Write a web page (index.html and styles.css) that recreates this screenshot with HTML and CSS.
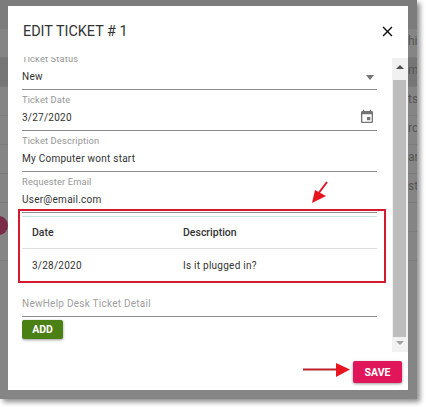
FILE: index.html
```html
<!DOCTYPE html>
<html lang="en">
<head>
  <meta charset="UTF-8" />
  <title>Edit Ticket</title>
  <link rel="stylesheet" href="styles.css">
</head>
<body>
  <div class="screen">
    <div class="rows">
      <div class="row"></div>
      <div class="row"><span>hi</span></div>
      <div class="row active"><span>mi</span></div>
      <div class="row"><span>ts</span></div>
      <div class="row"><span>rc</span></div>
      <div class="row"><span>ar</span></div>
      <div class="row"><span>st</span></div>
      <div class="row"></div>
      <div class="row"></div>
    </div>
    <div class="badge"></div>

    <div class="dialog">
      <div class="dialog-head">
        <div class="title">EDIT TICKET # 1</div>
        <svg class="close" viewBox="0 0 24 24"><path d="M19 6.41 17.59 5 12 10.59 6.41 5 5 6.41 10.59 12 5 17.59 6.41 19 12 13.41 17.59 19 19 17.59 13.41 12z"/></svg>
      </div>

      <div class="dialog-body">
        <div class="scroll-area">
          <div class="form">
            <div class="field">
              <label>Ticket Status</label>
              <div class="value">New<span class="select-arrow"></span></div>
            </div>
            <div class="field">
              <label>Ticket Date</label>
              <div class="value">3/27/2020
                <svg class="calendar" viewBox="0 0 24 24"><path d="M17 12h-5v5h5v-5zM16 1v2H8V1H6v2H5c-1.11 0-1.99.9-1.99 2L3 19c0 1.1.89 2 2 2h14c1.1 0 2-.9 2-2V5c0-1.1-.9-2-2-2h-1V1h-2zm3 18H5V8h14v11z"/></svg>
              </div>
            </div>
            <div class="field">
              <label>Ticket Description</label>
              <div class="value">My Computer wont start</div>
            </div>
            <div class="field">
              <label>Requester Email</label>
              <div class="value">User@email.com</div>
            </div>

            <table class="details">
              <tr><th>Date</th><th>Description</th></tr>
              <tr><td>3/28/2020</td><td>Is it plugged in?</td></tr>
            </table>

            <div class="field new-detail">
              <div class="value placeholder">NewHelp Desk Ticket Detail</div>
            </div>
            <button class="btn add">ADD</button>
          </div>
        </div>

        <div class="scrollbar">
          <div class="scroll-btn"><span class="arrow-up"></span></div>
          <div class="thumb"></div>
          <div class="scroll-btn down"><span class="arrow-down"></span></div>
        </div>
      </div>

      <div class="dialog-foot">
        <button class="btn save">SAVE</button>
      </div>
    </div>
  </div>

  <!-- red annotations drawn on top of the screenshot -->
  <svg class="notes" viewBox="0 0 426 407">
    <rect x="19" y="210" width="366" height="72" fill="none" stroke="#d41a30" stroke-width="2"/>
    <path d="M327 182 318 194" stroke="#e0182c" stroke-width="2" fill="none"/>
    <path d="M312 203 315 190 326 196z" fill="#e8141f"/>
    <path d="M303 369.5H337" stroke="#b8202c" stroke-width="2" fill="none"/>
    <path d="M350 369.5 336 363V377z" fill="#e8141f"/>
  </svg>
</body>
</html>
```

FILE: styles.css
```css
* {
  box-sizing: border-box;
}
html, body {
  height: 100%;
}
body {
  margin: 0;
  background: #fff;
  font-family: Roboto, Arial, sans-serif;
  color: #333;
  overflow: hidden;
}
.screen {
  position: relative;
  width: 417px;
  height: 399px;
  background: #858585;
  box-shadow: 3px 3px 5px rgba(0, 0, 0, 0.45);
  overflow: hidden;
}
.rows {
  display: flex;
  flex-direction: column;
}
.row {
  height: 29px;
  border-bottom: 1px solid #7b7b7b;
  padding-left: 408px;
  font-size: 12px;
  line-height: 25px;
  color: #555;
  white-space: nowrap;
}
.row:first-child {
  background: #7c7c7c;
}
.row.active {
  background: #767676;
}
.badge {
  position: absolute;
  left: -11px;
  top: 216px;
  width: 19px;
  height: 19px;
  border-radius: 50%;
  background: #7a2b47;
}
.dialog {
  position: absolute;
  left: 8px;
  top: 6px;
  width: 400px;
  height: 384px;
  background: #fff;
  display: flex;
  flex-direction: column;
}
.dialog-head {
  height: 51px;
  flex: none;
  display: flex;
  align-items: center;
  justify-content: space-between;
  padding: 0 12px 0 15px;
}
.title {
  font-size: 14.4px;
  color: #333;
}
.close {
  width: 17px;
  height: 17px;
  fill: #111;
}
.dialog-body {
  flex: none;
  height: 295px;
  display: flex;
}
.scroll-area {
  flex: none;
  width: 355px;
  margin: 0 15px 0 14px;
  overflow: hidden;
}
.form {
  margin-top: -8px;
}
.field {
  height: 41px;
  padding-top: 4px;
  border-bottom: 1px solid #8c8c8c;
}
.field label {
  display: block;
  height: 12px;
  font-size: 9.3px;
  line-height: 12px;
  letter-spacing: 0.15px;
  color: #969696;
}
.value {
  display: flex;
  align-items: center;
  justify-content: space-between;
  height: 16px;
  margin-top: 4px;
  font-size: 10px;
  line-height: 16px;
  letter-spacing: 0.25px;
}
.select-arrow {
  width: 0;
  height: 0;
  margin-right: 3px;
  border-left: 4.5px solid transparent;
  border-right: 4.5px solid transparent;
  border-top: 5px solid #757575;
}
.calendar {
  width: 16px;
  height: 16px;
  fill: #757575;
  margin-right: 2px;
  margin-top: -2px;
}
.details {
  width: 100%;
  margin-top: 3px;
  border-collapse: collapse;
  border-top: 1px solid #c6e4e4;
  font-size: 10px;
  table-layout: fixed;
}
.details th {
  height: 32px;
  padding: 0 0 0 10px;
  text-align: left;
  font-size: 10.5px;
  font-weight: 500;
  border-bottom: 1px solid #e0e0e0;
}
.details td {
  height: 33px;
  padding: 0 0 0 10px;
  letter-spacing: 0.25px;
}
.details th:first-child, .details td:first-child {
  width: 151px;
}
.new-detail {
  height: 21px;
  margin-top: 14px;
  padding-top: 0;
}
.placeholder {
  margin-top: 0;
  color: #a0a0a0;
  font-size: 10px;
  letter-spacing: 0.25px;
}
.btn {
  border: none;
  border-radius: 2px;
  color: #fff;
  font-family: Roboto, Arial, sans-serif;
  font-size: 10.5px;
  font-weight: 700;
  padding: 0;
  box-shadow: 0 1px 3px rgba(0, 0, 0, 0.4);
}
.add {
  display: block;
  width: 41px;
  height: 19px;
  margin-top: 3px;
  background: #4b8014;
}
.save {
  width: 49px;
  height: 22px;
  background: #e0155a;
}
.scrollbar {
  flex: none;
  width: 16px;
  margin-top: 1px;
  display: flex;
  flex-direction: column;
  background: #f1f1f1;
}
.scroll-btn {
  height: 22px;
  flex: none;
  display: flex;
  justify-content: center;
  padding-top: 7px;
}
.scroll-btn.down {
  height: 15px;
  padding-top: 4px;
}
.arrow-up, .arrow-down {
  width: 0;
  height: 0;
  border-left: 4px solid transparent;
  border-right: 4px solid transparent;
}
.arrow-up {
  border-bottom: 4px solid #505050;
}
.arrow-down {
  border-top: 4px solid #a0a0a0;
}
.thumb {
  flex: 1;
  margin: 0 2px 0 1px;
  background: #bdbdbd;
}
.dialog-foot {
  flex: 1;
  display: flex;
  justify-content: flex-end;
  padding: 9px 6px 0 0;
}
.notes {
  position: absolute;
  left: 0;
  top: 0;
  width: 426px;
  height: 407px;
  pointer-events: none;
}
```
